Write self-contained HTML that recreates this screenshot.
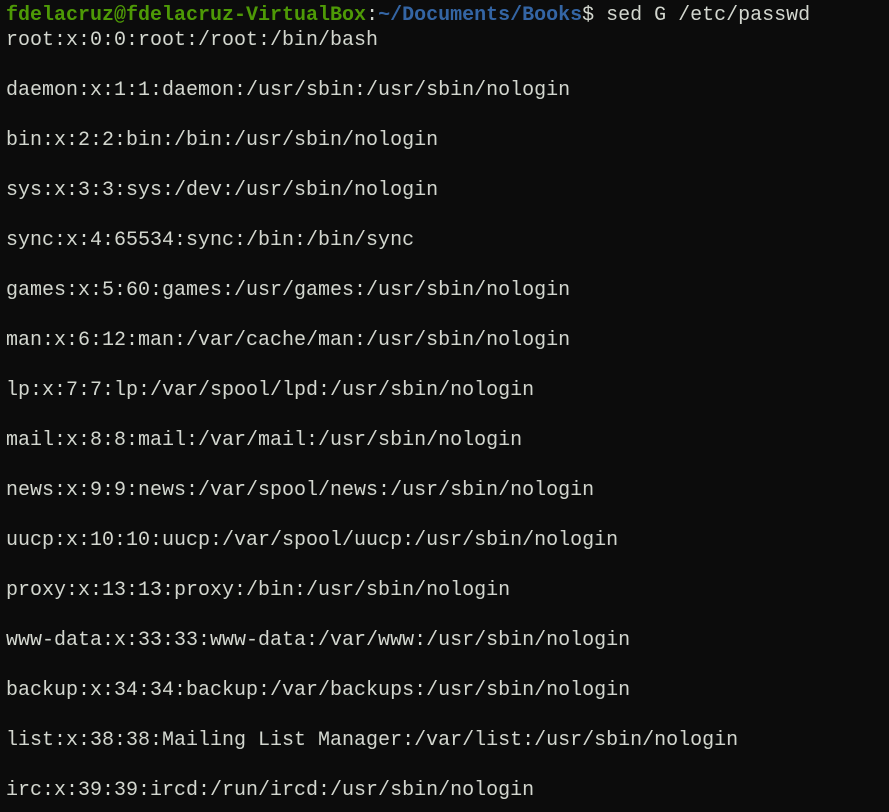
<html><head><style>
body{margin:0;background:#0c0c0c;width:889px;height:812px;overflow:hidden}
pre{margin:0;padding:3px 0 0 6px;font-family:"Liberation Mono",monospace;font-size:20px;line-height:25px;color:#d3d7cf}
.g{color:#4e9a06;font-weight:bold}.b{color:#3465a4;font-weight:bold}
</style></head><body><pre><span class="g">fdelacruz@fdelacruz-VirtualBox</span>:<span class="b">~/Documents/Books</span>$ sed G /etc/passwd
root:x:0:0:root:/root:/bin/bash

daemon:x:1:1:daemon:/usr/sbin:/usr/sbin/nologin

bin:x:2:2:bin:/bin:/usr/sbin/nologin

sys:x:3:3:sys:/dev:/usr/sbin/nologin

sync:x:4:65534:sync:/bin:/bin/sync

games:x:5:60:games:/usr/games:/usr/sbin/nologin

man:x:6:12:man:/var/cache/man:/usr/sbin/nologin

lp:x:7:7:lp:/var/spool/lpd:/usr/sbin/nologin

mail:x:8:8:mail:/var/mail:/usr/sbin/nologin

news:x:9:9:news:/var/spool/news:/usr/sbin/nologin

uucp:x:10:10:uucp:/var/spool/uucp:/usr/sbin/nologin

proxy:x:13:13:proxy:/bin:/usr/sbin/nologin

www-data:x:33:33:www-data:/var/www:/usr/sbin/nologin

backup:x:34:34:backup:/var/backups:/usr/sbin/nologin

list:x:38:38:Mailing List Manager:/var/list:/usr/sbin/nologin

irc:x:39:39:ircd:/run/ircd:/usr/sbin/nologin
</pre></body></html>
